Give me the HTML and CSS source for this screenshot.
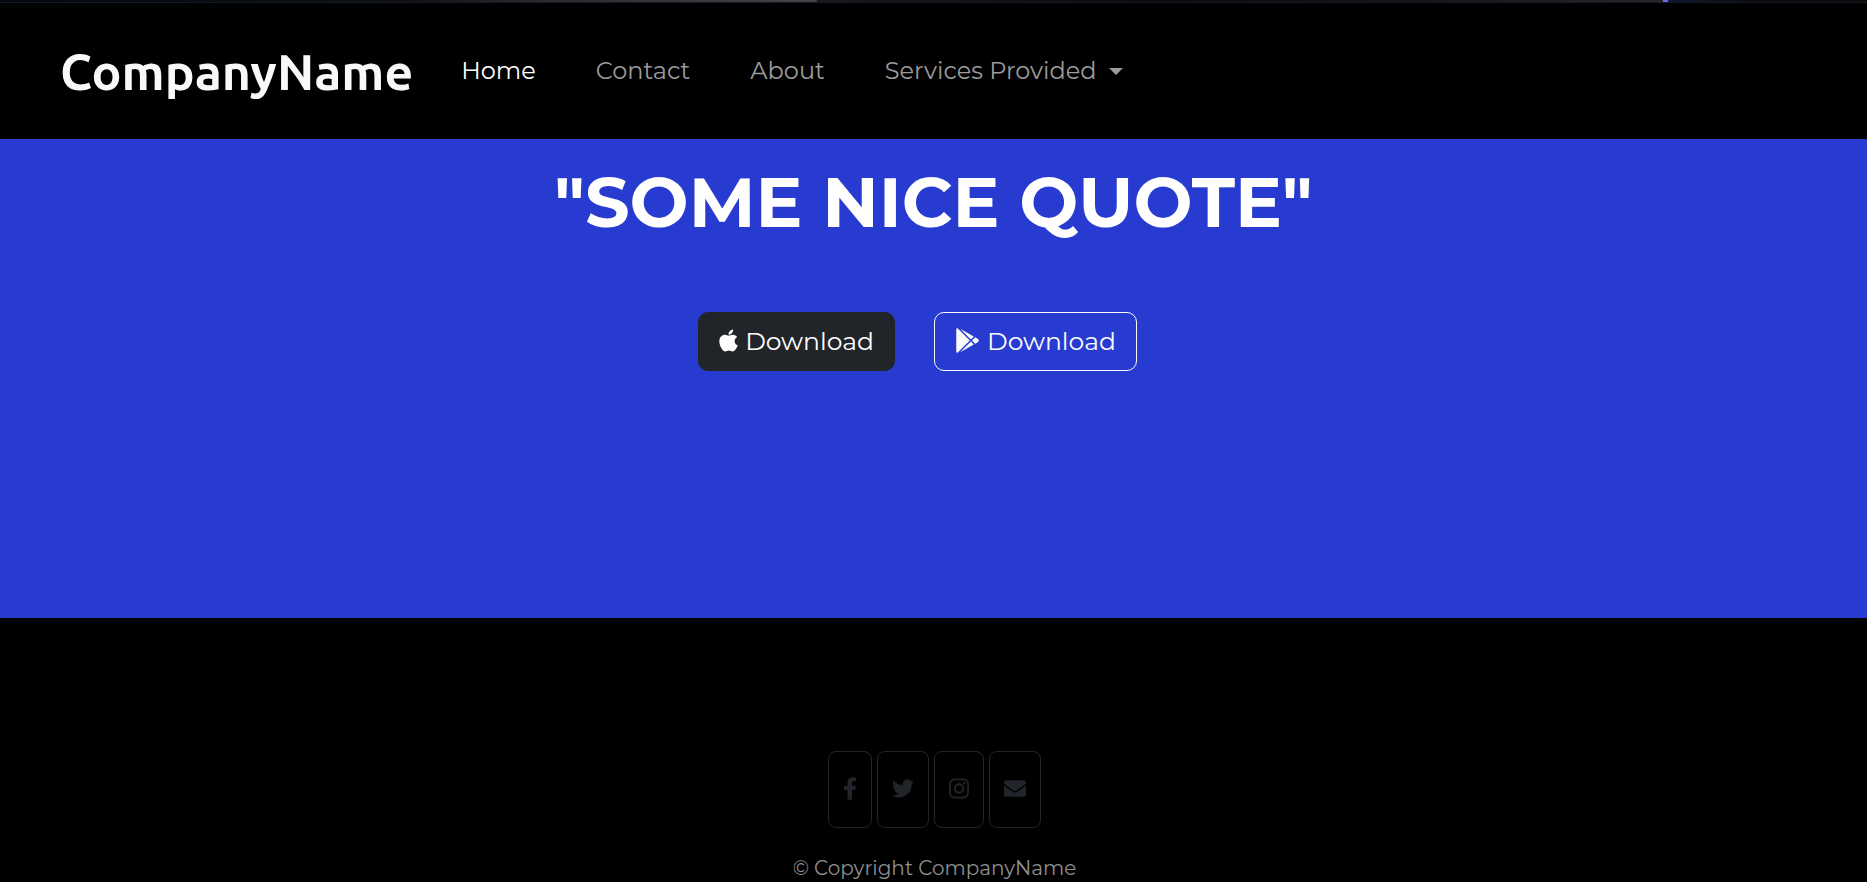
FILE: index.html
```html
<!DOCTYPE html>
<html lang="en">
<head>
<meta charset="utf-8">
<meta name="viewport" content="width=device-width, initial-scale=1">
<title>CompanyName</title>
<link rel="stylesheet" href="styles.css">
</head>
<body>
<div class="top-strip"></div>
<header class="navbar">
  <a class="brand" href="#">CompanyName</a>
  <nav class="nav">
    <a class="nav-link active" href="#">Home</a>
    <a class="nav-link" href="#contact">Contact</a>
    <a class="nav-link" href="#about">About</a>
    <button class="nav-link dropdown" type="button" aria-haspopup="true">Services Provided<span class="caret"></span></button>
  </nav>
</header>
<main class="hero">
  <h1 class="quote">"SOME NICE QUOTE"</h1>
  <div class="downloads">
    <button class="btn btn-dark" type="button">
      <svg class="icon-apple" viewBox="0 0 384 512" aria-hidden="true"><path d="M318.7 268.7c-.2-36.7 16.4-64.4 50-84.8-18.8-26.9-47.2-41.7-84.7-44.6-35.5-2.8-74.3 20.7-88.5 20.7-15 0-49.4-19.7-76.4-19.7C63.3 141.2 4 184.8 4 273.5q0 39.3 14.4 81.2c12.8 36.7 59 126.7 107.2 125.2 25.2-.6 43-17.9 75.8-17.9 31.8 0 48.3 17.9 76.4 17.9 48.6-.7 90.4-82.5 102.6-119.3-65.2-30.7-61.7-90-61.7-91.900zm-56.600-164.200c27.300-32.400 24.800-61.900 24-72.500-24.100 1.400-52 16.400-67.900 34.900-17.500 19.800-27.800 44.300-25.600 71.900 26.100 2 49.900-11.400 69.500-34.300z"/></svg>
      Download
    </button>
    <button class="btn btn-outline" type="button">
      <svg class="icon-play" viewBox="0 0 512 512" aria-hidden="true"><path d="M325.3 234.3L104.6 13l280.8 161.200-60.100 60.100zM47 0C34 6.800 25.300 19.200 25.300 35.300v441.300c0 16.100 8.700 28.500 21.700 35.300l256.600-256L47 0zm425.200 225.600l-58.900-34.100-65.700 64.500 65.700 64.500 60.100-34.100c18-14.300 18-46.500-1.200-60.800zM104.600 499l280.800-161.200-60.100-60.100L104.600 499z"/></svg>
      Download
    </button>
  </div>
</main>
<footer class="footer">
  <div class="social">
    <button class="social-btn" type="button" aria-label="Facebook"><svg class="icon-facebook" viewBox="0 0 320 512" aria-hidden="true"><path d="M279.140 288l14.220-92.660h-88.910v-60.130c0-25.350 12.420-50.060 52.240-50.060h40.420V6.260S260.430 0 225.360 0c-73.220 0-121.080 44.380-121.080 124.720v70.620H22.890V288h81.390v224h100.170V288z"/></svg></button>
    <button class="social-btn" type="button" aria-label="Twitter"><svg class="icon-wide" viewBox="0 0 512 512" aria-hidden="true"><path d="M459.370 151.716c.325 4.548.325 9.097.325 13.645 0 138.720-105.583 298.558-298.558 298.558-59.452 0-114.680-17.219-161.137-47.106 8.447.974 16.568 1.299 25.340 1.299 49.055 0 94.213-16.568 130.274-44.832-46.132-.975-84.792-31.188-98.112-72.772 6.498.974 12.995 1.624 19.818 1.624 9.421 0 18.843-1.300 27.614-3.573-48.081-9.747-84.143-51.980-84.143-102.985v-1.299c13.969 7.797 30.214 12.670 47.431 13.319-28.264-18.843-46.781-51.005-46.781-87.391 0-19.492 5.197-37.360 14.294-52.954 51.655 63.675 129.300 105.258 216.365 109.807-1.624-7.797-2.599-15.918-2.599-24.040 0-57.828 46.782-104.934 104.934-104.934 30.213 0 57.502 12.670 76.670 33.137 23.715-4.548 46.456-13.320 66.599-25.340-7.798 24.366-24.366 44.833-46.132 57.827 21.117-2.273 41.584-8.122 60.426-16.243-14.292 20.791-32.161 39.308-52.628 54.253z"/></svg></button>
    <button class="social-btn" type="button" aria-label="Instagram"><svg class="icon-instagram" viewBox="0 0 448 512" aria-hidden="true"><path d="M224.100 141c-63.600 0-114.900 51.300-114.900 114.900s51.300 114.900 114.900 114.900S339 319.500 339 255.900 287.700 141 224.100 141zm0 189.600c-41.100 0-74.700-33.500-74.700-74.700s33.500-74.700 74.700-74.700 74.700 33.500 74.700 74.700-33.600 74.700-74.700 74.700zm146.400-194.300c0 14.900-12 26.800-26.800 26.800-14.900 0-26.800-12-26.800-26.800s12-26.800 26.800-26.800 26.800 12 26.800 26.800zm76.100 27.200c-1.700-35.900-9.900-67.700-36.200-93.900-26.200-26.200-58-34.400-93.900-36.200-37-2.100-147.900-2.100-184.900 0-35.800 1.700-67.600 9.900-93.900 36.100s-34.400 58-36.200 93.900c-2.100 37-2.100 147.900 0 184.900 1.700 35.900 9.900 67.700 36.200 93.900s58 34.400 93.900 36.200c37 2.100 147.900 2.100 184.900 0 35.900-1.700 67.700-9.900 93.900-36.200 26.200-26.200 34.400-58 36.200-93.900 2.100-37 2.100-147.800 0-184.800zM398.800 388c-7.800 19.600-22.900 34.700-42.600 42.600-29.500 11.700-99.500 9-132.100 9s-102.700 2.600-132.100-9c-19.600-7.800-34.700-22.900-42.600-42.600-11.700-29.500-9-99.500-9-132.100s-2.600-102.700 9-132.100c7.800-19.600 22.900-34.700 42.600-42.600 29.500-11.700 99.500-9 132.100-9s102.700-2.600 132.100 9c19.600 7.800 34.700 22.900 42.600 42.600 11.700 29.500 9 99.500 9 132.100s2.700 102.700-9 132.100z"/></svg></button>
    <button class="social-btn" type="button" aria-label="Email"><svg class="icon-wide" viewBox="0 0 512 512" aria-hidden="true"><path d="M502.300 190.800c3.900-3.100 9.700-.2 9.700 4.700V400c0 26.500-21.500 48-48 48H48c-26.500 0-48-21.500-48-48V195.600c0-5 5.700-7.800 9.700-4.700 22.400 17.400 52.100 39.500 154.100 113.600 21.100 15.400 56.700 47.800 92.200 47.600 35.700.3 72-32.800 92.300-47.600 102-74.100 131.600-96.300 154-113.700zM256 320c23.200.4 56.600-29.200 73.400-41.400 132.700-96.300 142.800-104.700 173.400-128.700 5.800-4.500 9.200-11.500 9.200-18.900v-19c0-26.500-21.500-48-48-48H48c-26.500 0-48 21.500-48 48v19c0 7.400 3.400 14.300 9.200 18.900 30.600 23.900 40.700 32.400 173.400 128.700 16.800 12.200 50.200 41.800 73.400 41.400z"/></svg></button>
  </div>
  <p class="copyright">© Copyright CompanyName</p>
</footer>
</body>
</html>
```
FILE: styles.css
```css
* {
  box-sizing: border-box;
}

body {
  margin: 0;
  background: #000;
  color: #fff;
  font-family: Montserrat, Inter, sans-serif;
}

a {
  text-decoration: none;
}

button {
  font: inherit;
  cursor: pointer;
}

svg {
  display: block;
  fill: currentColor;
}

.top-strip {
  height: 3px;
  border-bottom: 1px solid #0f1c2b;
  background:
    linear-gradient(#6a6af0, #6a6af0) 89.300% 0 / 5px 2px no-repeat,
    linear-gradient(90deg, #050708 0%, #111 22%, #282828 28%, #444 43.700%, #181818 43.800%, #0c0c0c 62%, #141414 75%, #262626 89%, #14142c 89.500%, #0c0c0c 94%);
}

.navbar {
  display: flex;
  align-items: center;
  height: 136px;
  padding: 0 60px;
}

.brand {
  color: #f8f9fa;
  font-family: Ubuntu, "Noto Sans", sans-serif;
  font-size: 50px;
  font-weight: 700;
  line-height: 64px;
}

.nav {
  display: flex;
  gap: 60px;
  margin-left: 48px;
}

.nav-link {
  padding: 0;
  border: 0;
  background: none;
  color: #9b9b9b;
  font-size: 24px;
  line-height: 36px;
}

.active {
  color: #fff;
}

.dropdown {
  display: flex;
  align-items: center;
  gap: 13px;
}

.caret {
  border: 7px solid transparent;
  border-top-color: currentColor;
  border-bottom: 0;
}

.hero {
  min-height: 479px;
  padding-top: 21px;
  background: #283bd1;
  text-align: center;
}

.quote {
  margin: 0;
  font-size: 70px;
  font-weight: 700;
  line-height: 84px;
}

.downloads {
  display: flex;
  justify-content: center;
  gap: 39px;
  margin-top: 68px;
  padding-right: 32px;
}

.btn {
  display: flex;
  align-items: center;
  gap: 7px;
  height: 59px;
  padding: 0 20px 2px;
  border: 1px solid;
  border-radius: 10px;
  font-size: 25px;
}

.btn-dark {
  border-color: #212529;
  background: #212529;
  color: #fff;
}

.btn-outline {
  border-color: #f8f9fa;
  background: transparent;
  color: #f8f9fa;
}

.icon-apple {
  width: 19px;
  height: 25px;
}

.icon-play {
  width: 25px;
  height: 25px;
}

.footer {
  padding: 133px 0 0 2px;
  text-align: center;
}

.social {
  display: flex;
  justify-content: center;
  gap: 5px;
}

.social-btn {
  display: flex;
  align-items: center;
  height: 77px;
  padding: 0 14px 2px;
  border: 1px solid #212529;
  border-radius: 8px;
  background: transparent;
  color: #212529;
}

.icon-facebook {
  width: 14px;
  height: 23px;
}

.icon-wide {
  width: 22px;
  height: 23px;
}

.icon-instagram {
  width: 20px;
  height: 23px;
}

.copyright {
  margin: 28px 0 0;
  color: #8f8f8f;
  font-size: 20px;
  line-height: 24px;
}
```
